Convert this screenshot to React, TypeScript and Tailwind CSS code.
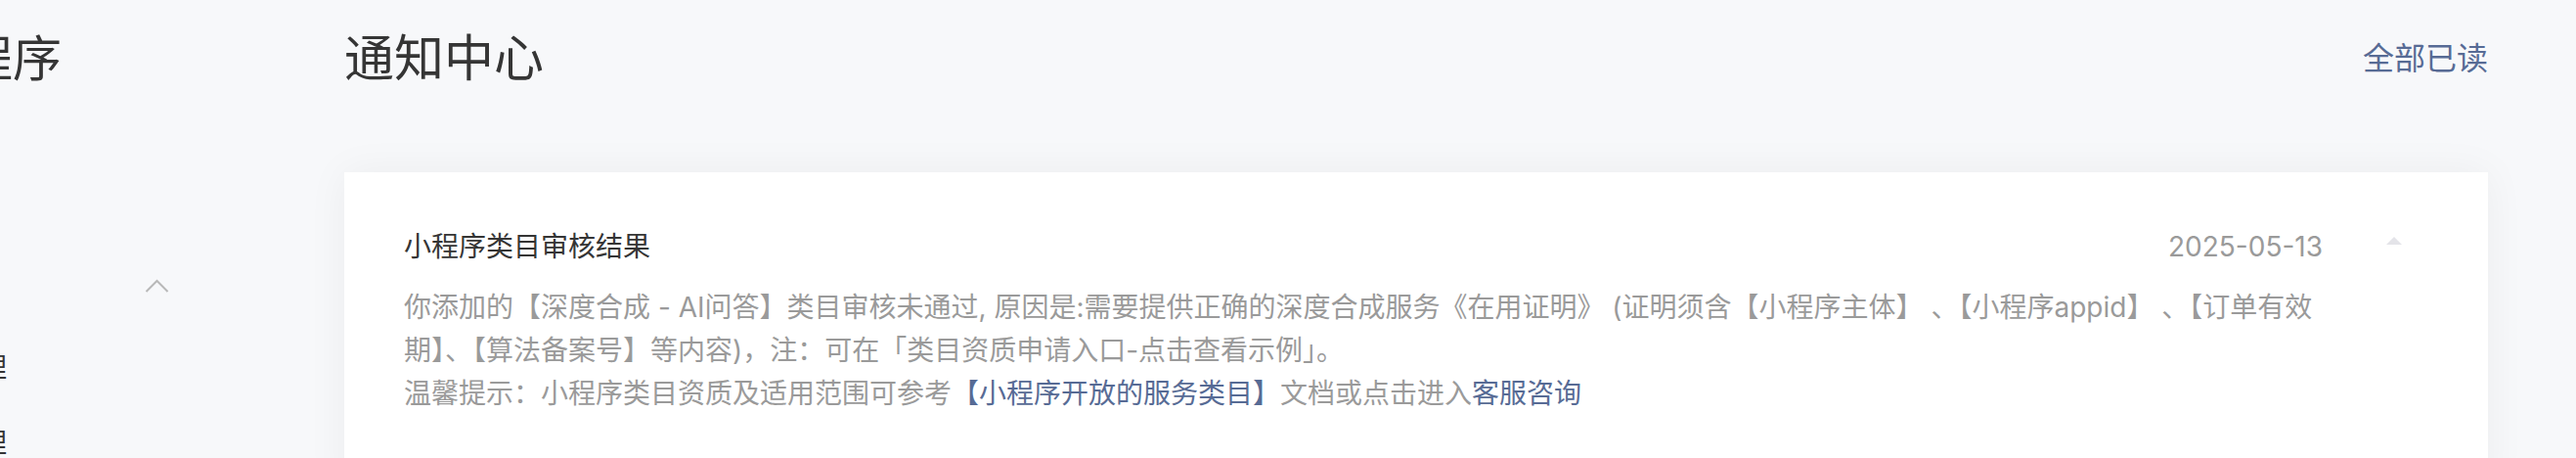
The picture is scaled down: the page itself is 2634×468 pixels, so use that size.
import React from "react";

const ChevronUp = () => (
  <svg width="25" height="14" viewBox="0 0 25 14" fill="none">
    <path d="M1.5 13L12.5 2L23.5 13" stroke="#b8b8b8" strokeWidth="2" />
  </svg>
);

const Caret = () => (
  <svg width="16" height="8" viewBox="0 0 16 8">
    <path d="M0 8L8 0L16 8Z" fill="#e4e4e9" />
  </svg>
);

const Sidebar = () => {
  const items = ["版本管理", "成员管理"];
  return (
    <aside className="-ml-[170px] w-[350px] shrink-0 text-[#353535]">
      <div className="flex h-[120px] items-center pl-[83px] text-[50px]">小程序</div>
      <div className="mt-[134px] flex h-[76px] items-center justify-between pl-[20px] pr-[7px] text-[28px]">
        <span>开发管理</span>
        <ChevronUp />
      </div>
      <ul className="mt-[7px]">
        {items.map((item) => (
          <li key={item} className="flex h-[77px] items-center pl-[65px] text-[28px]">
            {item}
          </li>
        ))}
      </ul>
    </aside>
  );
};

const Link = ({ children }: { children: React.ReactNode }) => (
  <a className="cursor-pointer text-[#576b95]">{children}</a>
);

const NoticeCard = () => (
  <div className="mt-[56px] bg-white pb-[80px] pl-[61px] pr-[88px] pt-[56px] shadow-[0_0_40px_rgba(0,0,0,0.05)]">
    <div className="flex h-[40px] items-center">
      <div className="flex-1 text-[28px] text-[#353535]">小程序类目审核结果</div>
      <div className="text-[28px] text-[#9a9a9a]">2025-05-13</div>
      <div className="mb-[12px] ml-[65px] flex">
        <Caret />
      </div>
    </div>
    <div className="mr-[81px] mt-[20px] text-[28px] leading-[44px] text-[#9a9a9a]">
      <p>
        你添加的【深度合成 - AI问答】类目审核未通过, 原因是:需要提供正确的深度合成服务《在用证明》 (证明须含【小程序主体】 、【小程序appid】 、【订单有效期】、【算法备案号】等内容)，注：可在「类目资质申请入口-点击查看示例」。
      </p>
      <p>
        温馨提示：小程序类目资质及适用范围可参考<Link>【小程序开放的服务类目】</Link>文档或点击进入<Link>客服咨询</Link>
      </p>
    </div>
  </div>
);

export default function App() {
  return (
    <div className="flex h-[468px] overflow-hidden bg-[#f7f8fa] [font-family:Inter,'Noto_Sans_CJK_SC',sans-serif]">
      <Sidebar />
      <main className="ml-[172px] flex-1 pr-[90px]">
        <div className="flex h-[120px] items-center justify-between">
          <h1 className="text-[51px] font-normal text-[#353535]">通知中心</h1>
          <a className="cursor-pointer text-[32px] text-[#576b95]">全部已读</a>
        </div>
        <NoticeCard />
      </main>
    </div>
  );
}
